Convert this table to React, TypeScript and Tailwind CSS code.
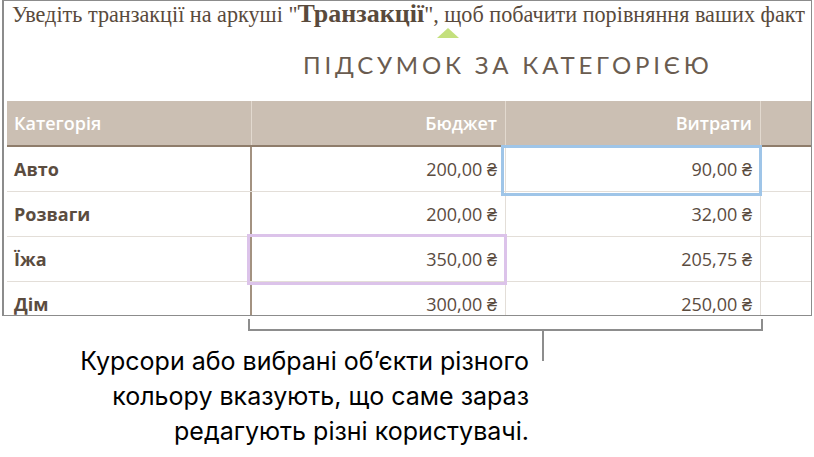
import React from 'react';

const rows = [
  { name: 'Авто', budget: '200,00 ₴', spent: '90,00 ₴' },
  { name: 'Розваги', budget: '200,00 ₴', spent: '32,00 ₴' },
  { name: 'Їжа', budget: '350,00 ₴', spent: '205,75 ₴' },
  { name: 'Дім', budget: '300,00 ₴', spent: '250,00 ₴' },
];

function SummaryTable() {
  return (
    <div className="font-['Open_Sans',sans-serif] text-[18px] text-[#5b4c3f]">
      <div className="grid grid-cols-[245px_254px_255px_52px] h-[46px] bg-[#cbbfb3] border-b-2 border-[#8f7d6b] text-white font-semibold">
        <div className="flex items-center pl-[7px] border-r border-[#e2d9cf]">Категорія</div>
        <div className="flex items-center justify-end pr-[8px] border-r border-[#e2d9cf]">Бюджет</div>
        <div className="flex items-center justify-end pr-[8px] border-r border-[#e2d9cf]">Витрати</div>
        <div />
      </div>
      {rows.map((r) => (
        <div
          key={r.name}
          className="grid grid-cols-[245px_254px_255px_52px] h-[45px] border-b border-[#e3ded8]"
        >
          <div className="flex items-center pl-[7px] font-bold border-r-2 border-[#a39281]">{r.name}</div>
          <div className="flex items-center justify-end pr-[8px] border-r border-[#e3ded8]">{r.budget}</div>
          <div className="flex items-center justify-end pr-[8px] border-r border-[#e3ded8]">{r.spent}</div>
          <div />
        </div>
      ))}
    </div>
  );
}

export default function App() {
  return (
    <div className="relative w-[814px] h-[457px] bg-white overflow-hidden">
      <div className="ml-[2px] w-[810px] h-[316px] border border-l-2 border-[#8c8c8c] overflow-hidden">
        <div className="h-[27px] pl-[8px] whitespace-nowrap font-['Liberation_Serif',serif] text-[22.2px] leading-[26px] text-[#594a3c]">
          Уведіть транзакції на аркуші "<span className="font-bold text-[26px]">Транзакції</span>", щоб побачити порівняння ваших факт
        </div>
        <div className="h-[10px] pl-[433px]">
          <div className="w-0 h-0 border-l-[11px] border-r-[11px] border-b-[10px] border-l-transparent border-r-transparent border-b-[#c4e07d]" />
        </div>
        <div className="h-[63px] pl-[299px] pt-[12px] font-['Lato',sans-serif] text-[24px] leading-[30px] tracking-[3.8px] text-[#6a5c50] whitespace-nowrap">
          ПІДСУМОК ЗА КАТЕГОРІЄЮ
        </div>
        <div className="pl-[3px]">
          <SummaryTable />
        </div>
      </div>

      <div className="absolute left-[501px] top-[145px] w-[261px] h-[51px] border-[3px] border-[#9fc5e8]" />
      <div className="absolute left-[247px] top-[234px] w-[260px] h-[51px] border-[3px] border-[#dcc3ea]" />

      <svg className="absolute left-0 top-[316px]" width="814" height="50">
        <path d="M249 3 V14 H762 V3 M543 14 V45" fill="none" stroke="#8d8d8d" strokeWidth="2" />
      </svg>

      <div className="absolute left-0 top-[344px] w-[529px] text-right font-['Inter',sans-serif] text-[25px] leading-[35px] text-black">
        <div>Курсори або вибрані об’єкти різного</div>
        <div>кольору вказують, що саме зараз</div>
        <div>редагують різні користувачі.</div>
      </div>
    </div>
  );
}
